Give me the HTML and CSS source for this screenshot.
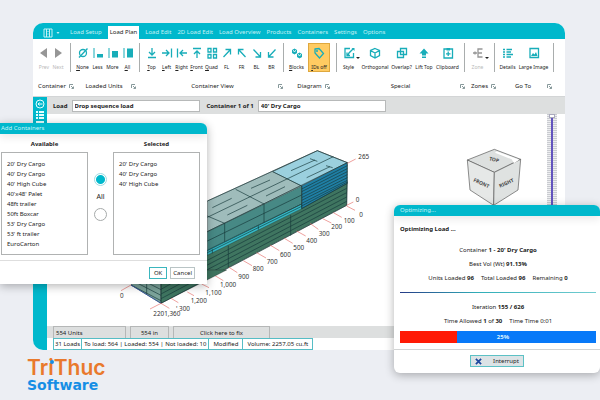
FILE: index.html
```html
<!DOCTYPE html>
<html lang="en">
<head>
<meta charset="utf-8">
<title>Load Plan</title>
<link rel="stylesheet" href="styles.css">
</head>
<body>
<main class="window">
  <nav class="tabs">
    <button class="app-menu" aria-label="Menu">
      <svg class="menu-icon" viewBox="0 0 18 10"><path d="M1 1h8v8H1zM3.500 1v8M6.500 1v8M4.500 3.500h1M4.500 6h1"/><path class="solid" d="M13.500 4h3l-1.500 2z"/></svg>
    </button>
    <a href="#">Load Setup</a>
    <a href="#" class="active">Load Plan</a>
    <a href="#">Load Edit</a>
    <a href="#">2D Load Edit</a>
    <a href="#">Load Overview</a>
    <a href="#">Products</a>
    <a href="#">Containers</a>
    <a href="#">Settings</a>
    <a href="#">Options</a>
  </nav>

  <section class="ribbon">
    <div class="tools">
      <div class="group nav-group">
        <button class="tool off"><svg viewBox="0 0 12 12"><path class="solid" d="M9 1v10L2 6z"/></svg><span>Prev</span></button>
        <button class="tool off"><svg viewBox="0 0 12 12"><path class="solid" d="M3 1v10l7-5z"/></svg><span>Next</span></button>
      </div>
      <div class="group units-group">
        <button class="tool"><svg viewBox="0 0 12 12"><circle cx="6" cy="6" r="3.500"/><path d="M2 10.500L10.500 1.500"/></svg><span><u>N</u>one</span></button>
        <button class="tool"><svg viewBox="0 0 12 12"><path class="dots" d="M2 1.500v10"/><path class="solid" d="M5 7h6v3.500H5z"/></svg><span>Less</span></button>
        <button class="tool"><svg viewBox="0 0 12 12"><path class="dots" d="M2 1.500v10"/><path class="solid" d="M5 4h6v6.500H5z"/></svg><span>More</span></button>
        <button class="tool"><svg viewBox="0 0 12 12"><path class="dots" d="M2 1.500v10"/><path class="solid" d="M5 1.500h6v9H5z"/></svg><span><u>A</u>ll</span></button>
      </div>
      <div class="group view-group">
        <button class="tool"><svg viewBox="0 0 12 12"><path d="M6 1v7M3 5l3 3 3-3M2 10.500h8"/></svg><span><u>T</u>op</span></button>
        <button class="tool"><svg viewBox="0 0 12 12"><path d="M1 6h7M5 3l3 3-3 3M10.500 1.500v9"/></svg><span><u>L</u>eft</span></button>
        <button class="tool"><svg viewBox="0 0 12 12"><path d="M11 6H4M7 3L4 6l3 3M1.500 1.500v9"/></svg><span><u>R</u>ight</span></button>
        <button class="tool"><svg viewBox="0 0 12 12"><path d="M6 11V4M3 7l3-3 3 3M2 1.500h8"/></svg><span><u>F</u>ront</span></button>
        <button class="tool"><svg viewBox="0 0 12 12"><path d="M2 1.500h3v3.500H2zM7.500 1.500h3v3.500h-3zM2 7.500h3V11H2zM7.500 7.500h3V11h-3z"/></svg><span><u>Q</u>uad</span></button>
        <button class="tool"><svg viewBox="0 0 12 12"><path d="M2.500 10L9.500 2.500M4.500 2.500h5v5"/></svg><span>FL</span></button>
        <button class="tool"><svg viewBox="0 0 12 12"><path d="M9.500 10L2.500 2.500M7.500 2.500h-5v5"/></svg><span>FR</span></button>
        <button class="tool"><svg viewBox="0 0 12 12"><path d="M2.500 2.500L9.500 10M9.500 5v5h-5"/></svg><span>BL</span></button>
        <button class="tool"><svg viewBox="0 0 12 12"><path d="M9.500 2.500L2.500 10M2.500 5v5h5"/></svg><span>BR</span></button>
      </div>
      <div class="group diagram-group">
        <button class="tool"><svg viewBox="0 0 12 12"><path class="solid" d="M1 3l2.500-1.500L6 3v3L3.500 7.500 1 6zM6 7l2.500-1.500L11 7v3L8.500 11.500 6 10z"/><path class="cut" d="M2 3.500l1.500 1L5 3.500M7 7.500l1.500 1 1.500-1"/></svg><span><u>B</u>locks</span></button>
        <button class="tool picked" aria-pressed="true"><svg viewBox="0 0 12 12"><path d="M2 2l4-.5 4.500 5-4 4.500L2 6z"/><circle class="solid" cx="4" cy="4" r="1"/></svg><span><u>I</u>Ds off</span></button>
      </div>
      <div class="group special-group">
        <button class="tool more"><svg viewBox="0 0 12 12"><path d="M7 1.500H2v9h8.500V6M5 8l1-2 4-4M4 5.500v3h3"/><path class="solid" d="M8.500 1h3v3z"/></svg><span>Style</span></button>
        <button class="tool"><svg viewBox="0 0 12 12"><path d="M6 1.500l4.500 2v5L6 11 1.500 8.500v-5zM1.500 3.500L6 6l4.500-2.500M6 6v5"/></svg><span>Orthogonal</span></button>
        <button class="tool"><svg viewBox="0 0 12 12"><path d="M4.500 1.500h6v6h-6zM4 4.500H1.500v6h6V8M4.500 4.500h3v3"/></svg><span>Overlap?</span></button>
        <button class="tool"><svg viewBox="0 0 12 12"><path class="solid" d="M6 1.500L10.500 6.500H8v2H4v-2H1.500zM4 9.500h4V11H4z"/></svg><span>Lift Top</span></button>
        <button class="tool"><svg viewBox="0 0 12 12"><path d="M2 2h8.500v9H2zM6.200 4.500v4.500M4 6.800h4.500"/><path class="solid" d="M4.500 1h3.500v2.500H4.500z"/></svg><span>Clipboard</span></button>
      </div>
      <div class="group zone-group">
        <button class="tool off more"><svg viewBox="0 0 12 12"><path d="M1 6h4M3 4.500v3M10.500 2H6v8h4.500M6 6h4"/></svg><span>Zone</span></button>
      </div>
      <div class="group goto-group">
        <button class="tool"><svg viewBox="0 0 12 12"><path d="M1 2.500h2M4.500 2.500H10M1 5h2M4.500 5H9M1 7.500h2M4.500 7.500H11M1 10h2M4.500 10H9"/></svg><span>Details</span></button>
        <button class="tool"><svg viewBox="0 0 12 12"><path d="M2 1.500h8.500v9H2z"/><path class="solid" d="M3 9l2-3 1.500 1.500L8 5l1.500 4z"/></svg><span>Large Image</span></button>
      </div>
    </div>
    <div class="captions">
      <div class="caption"><span>Container</span><svg viewBox="0 0 5 5"><path d="M.5 4V.5H4M2 2l2.500 2.500M4.500 2.500v2h-2"/></svg></div>
      <div class="caption"><span>Loaded Units</span><svg viewBox="0 0 5 5"><path d="M.5 4V.5H4M2 2l2.500 2.500M4.500 2.500v2h-2"/></svg></div>
      <div class="caption inset"><span>Container View</span><svg viewBox="0 0 5 5"><path d="M.5 4V.5H4M2 2l2.500 2.500M4.500 2.500v2h-2"/></svg></div>
      <div class="caption inset"><span>Diagram</span><svg viewBox="0 0 5 5"><path d="M.5 4V.5H4M2 2l2.500 2.500M4.500 2.500v2h-2"/></svg></div>
      <div class="caption inset"><span>Special</span><svg viewBox="0 0 5 5"><path d="M.5 4V.5H4M2 2l2.500 2.500M4.500 2.500v2h-2"/></svg></div>
      <div class="caption"><span>Zones</span><svg viewBox="0 0 5 5"><path d="M.5 4V.5H4M2 2l2.500 2.500M4.500 2.500v2h-2"/></svg></div>
      <div class="caption"><span>Go To</span><svg viewBox="0 0 5 5"><path d="M.5 4V.5H4M2 2l2.500 2.500M4.500 2.500v2h-2"/></svg></div>
    </div>
  </section>

  <div class="workspace">
    <aside class="side">
      <svg class="side-icon" viewBox="0 0 10 10"><circle cx="5" cy="5" r="4"/><path d="M7.500 5H3M4.500 3.500L3 5l1.500 1.500"/></svg>
      <svg class="side-icon bold" viewBox="0 0 10 10"><path d="M1 2h2M4 2h5M1 5h2M4 5h5M1 8h2M4 8h5"/></svg>
      <svg class="side-icon bold" viewBox="0 0 10 10"><path d="M1 1h8M1 4h8"/></svg>
    </aside>
    <div class="work">
      <div class="infobar">
        <label for="load">Load</label>
        <input id="load" type="text" value="Drop sequence load">
        <label class="second" for="box">Container 1 of 1</label>
        <input id="box" type="text" value="40' Dry Cargo">
      </div>
      <div class="canvas">
        <svg class="scene" viewBox="141 342 1500 636">
          <g transform="translate(570 390)">
            <path fill="#3f7560" d="M472 155L470 226 -87 519V420L52 365z"/>
            <path fill="#9fbcbb" d="M382 62L472 98 52 305V213z"/>
            <path fill="#9bd0de" d="M382 62L472 98 335 168 248 125z"/>
            <path fill="#1f7fa5" d="M472 98V160L335 236V168z"/>
            <path fill="#478985" d="M335 168V222L52 362V305z"/>
            <path fill="#35b8c5" d="M335 222V236L52 376V360z"/>
            <g class="edge">
              <path d="M52 213L382 62 472 98 52 305M472 98L470 226 52 447M430 80L52 262M248 125L335 168V236M137 178L222 222V278M52 258L104 280V335M302 255V317M115 347V412M335 236L472 160M335 222L52 362"/>
              <path d="M335 195L52 333M335 229L52 368M303 122L375 90M360 86L382 94M350 143L420 110M408 107L428 113M183 175L240 150M228 198L285 170M67 233L125 205M112 255L172 226"/>
              <path d="M335 177L472 107M335 185L472 116M335 194L472 125M335 203L472 134M335 211L472 143M335 220L472 151M335 228L472 156"/>
              <path d="M52 391L470 175M52 405L470 188M52 419L470 201M52 433L470 214M205 287v12M67 358v12"/>
            </g>
            <g class="tick"><path d="M472 100L497 87M470 226L490 216M470 228L495 241M430 248L455 262M398 266L424 279M360 280L385 298M320 303L347 318M283 325L308 340M240 345L268 362M200 368L228 384M160 392L186 407M117 412L142 428M75 437L100 452M35 462L57 473M-8 486L12 497"/></g>
            <g class="mark">
              <text x="505" y="87">265</text><text x="497" y="215">0</text><text x="508" y="260">0</text>
              <text x="461" y="278">100</text><text x="424" y="297">200</text><text x="386" y="319">300</text>
              <text x="349" y="338">400</text><text x="310" y="360">500</text><text x="270" y="382">600</text>
              <text x="230" y="403">700</text><text x="188" y="424">800</text><text x="145" y="448">900</text>
              <text x="90" y="472">1,000</text><text x="46" y="494">1,100</text><text x="2" y="518">1,200</text>
            </g>
          </g>
          <g transform="translate(300 810)">
            <path fill="#7ba39a" d="M93 45L140 0H183V100z"/>
            <path fill="#3f7560" d="M183 100V0H380z"/>
            <path class="edge" d="M140 20V72M93 45L183 92M100 33L183 76M115 24L183 59M183 40V100L320 28M183 86L300 24M183 72L280 20M183 58L250 20"/>
            <path fill="none" stroke="#35589a" stroke-width="3" d="M93 45L183 100"/>
            <path class="tick" d="M93 45L63 62M183 100L150 117M183 100L208 115M213 85L235 98"/>
            <g class="mark"><text x="60" y="83">0</text><text x="228" y="122">' 300</text><text x="160" y="137">2201,360</text></g>
          </g>
          <g class="cube" transform="translate(1140 360)">
            <path fill="#dde0df" d="M343 88L422 118 343 157 262 120z"/>
            <path fill="#e6e8e7" d="M262 120L343 157 341 256 270 210z"/>
            <path fill="#dfe2e1" d="M422 118L343 157 341 256 414 210z"/>
            <path class="shine" d="M350 94L418 119 402 130 395 118 345 98z"/>
            <text transform="translate(341 124) rotate(14)">TOP</text>
            <text transform="translate(302 194) rotate(24)">FRONT</text>
            <text transform="translate(381 194) rotate(-24)">RIGHT</text>
          </g>
        </svg>
        <input class="zoomer" type="range" min="0" max="100" value="0" aria-label="Zoom">
      </div>
      <div class="status">
        <span class="units">554 Units</span><span class="inches">554 in</span><button class="fix">Click here to fix</button>
      </div>
      <div class="totals">
        <span>31 Loads</span><span>To load: 564 | Loaded: 554 | Not loaded: 10</span><span class="wide">Modified</span><span class="wide">Volume: 2257.05 cu.ft</span>
      </div>
    </div>
  </div>
</main>

<footer class="logo"><span class="brand">TriThuc<i class="dot"></i></span><span class="sub">Software</span></footer>

<section class="dialog add" role="dialog" aria-label="Add Containers">
  <h2>Add Containers</h2>
  <div class="pick">
    <div class="column">
      <h3>Available</h3>
      <ul>
        <li>20' Dry Cargo</li><li>40' Dry Cargo</li><li>40' High Cube</li><li>40'x48' Palet</li><li>48ft trailer</li><li>50ft Boxcar</li><li>53' Dry Cargo</li><li>53' ft trailer</li><li>EuroCarton</li>
      </ul>
    </div>
    <div class="choice">
      <input type="radio" name="scope" id="some" aria-label="One" checked>
      <label for="all">All</label>
      <input type="radio" name="scope" id="all">
    </div>
    <div class="column">
      <h3>Selected</h3>
      <ul><li>20' Dry Cargo</li><li>40' Dry Cargo</li><li>40' High Cube</li></ul>
    </div>
  </div>
  <div class="actions"><button class="ok">OK</button><button>Cancel</button></div>
</section>

<section class="dialog optimizing" role="dialog" aria-label="Optimizing">
  <h2>Optimizing...</h2>
  <div class="progress">
    <h3>Optimizing Load ...</h3>
    <p>Container <b>1 - 20' Dry Cargo</b></p>
    <p>Best Vol (Wt) <b>91.13%</b></p>
    <p class="facts"><span>Units Loaded <b>96</b></span><span>Total Loaded <b>96</b></span><span>Remaining <b>0</b></span></p>
    <hr>
    <p>Iteration <b>155 / 626</b></p>
    <p class="facts"><span>Time Allowed <b>1</b> of <b>30</b></span><span>Time Time 0:01</span></p>
    <div class="bar"><span>25%</span></div>
  </div>
  <div class="actions"><button class="interrupt"><svg viewBox="0 0 8 8"><path d="M1 1l6 6M7 1L1 7"/></svg>Interrupt</button></div>
</section>
</body>
</html>
```
FILE: styles.css
```css
:root {
  --teal: #00b8cc;
  --icon: #18adb9;
  --gray: #dddfdf;
}

* { box-sizing: border-box; }

body {
  margin: 0;
  height: 100vh;
  padding: 23px 35px 0 33px;
  display: flex;
  flex-direction: column;
  position: relative;
  overflow: hidden;
  background: #eceef3;
  color: #222;
  font: 6px/10px "Noto Sans", sans-serif;
}

button, input { font: inherit; color: inherit; margin: 0; }
button { border: 0; background: none; padding: 0; }
h2, h3, p, ul { margin: 0; padding: 0; font-size: inherit; }
ul { list-style: none; }
svg { display: block; fill: none; stroke: currentColor; }

.window {
  flex: 1;
  min-height: 0;
  display: flex;
  flex-direction: column;
  border-radius: 10px 10px 0 10px;
  overflow: hidden;
  background: #fff;
}

.tabs {
  display: flex;
  align-items: flex-end;
  height: 16px;
  padding-left: 10px;
  background: var(--teal);
}
.tabs a {
  padding: 0 3px;
  color: #c4f1f5;
  line-height: 13px;
  text-decoration: none;
  white-space: nowrap;
}
.tabs .active { margin: 0 3px; padding: 0 2px; background: #fff; color: #222; }
.app-menu { width: 24px; height: 13px; color: #c4f1f5; }
.menu-icon { width: 18px; height: 10px; }
.menu-icon .solid { fill: currentColor; stroke: none; }

.ribbon { height: 58px; padding-top: 4px; border-bottom: 1px solid #d3d5d6; }
.tools, .captions { display: grid; white-space: nowrap; }
.tools { grid-template-columns: 38fr 69fr 144fr 53fr 128fr 30fr 59fr 11fr; }
.captions {
  grid-template-columns: 42fr 62fr 147fr 47fr 135fr 31fr 56fr 12fr;
  margin-top: 9px;
}
.group { display: grid; height: 29px; border-right: 1px solid #a9adad; }
.nav-group { grid-template-columns: 1fr 1fr; padding: 0 5px 0 4px; }
.units-group { grid-template-columns: repeat(4, 1fr); padding: 0 4px; }
.view-group { grid-template-columns: repeat(9, 1fr); padding: 0 4px; }
.diagram-group { grid-template-columns: 23fr 22fr; padding: 0 6px 0 1px; }
.special-group { grid-template-columns: 23fr 30fr 23fr 22fr 25fr; padding-right: 4px; }
.zone-group { grid-template-columns: 1fr; padding-right: 4px; }
.goto-group { grid-template-columns: 25fr 27fr; padding-right: 6px; }
.tool {
  display: flex;
  flex-direction: column;
  align-items: center;
  min-width: 0;
  padding-top: 4px;
  position: relative;
  font-size: 5px;
  line-height: 8px;
}
.tool svg { width: 12px; height: 12px; margin-bottom: 4px; color: var(--icon); stroke-width: 1.3; }
.tool .solid { fill: currentColor; stroke: none; }
.tool .cut { stroke: #fff; stroke-width: 1; }
.tool .dots { stroke-width: 2; stroke-dasharray: 1 1; }
.tool.off { color: #b9b9b9; }
.tool.off svg { color: #969696; }
.picked { background: #ffcb62; border: 1px solid #dfa83e; padding-top: 3px; }
.more::after {
  content: "";
  position: absolute;
  left: calc(50% + 7px);
  top: 14px;
  border: 2px solid transparent;
  border-top-color: #222;
}
.caption { display: flex; align-items: center; padding-left: 2px; text-align: center; }
.caption.inset { padding-left: 10px; }
.caption span { flex: 1; }
.caption svg { width: 5px; height: 5px; margin-right: 1px; color: #87999b; }

.workspace { flex: 1; min-height: 0; display: flex; }
.side {
  width: 14px;
  padding: 2px;
  display: flex;
  flex-direction: column;
  gap: 1px;
  background: var(--teal);
  color: #e4ffff;
}
.side-icon { width: 10px; height: 10px; }
.side-icon.bold { stroke-width: 2; }
.work { flex: 1; min-width: 0; display: flex; flex-direction: column; }
.infobar {
  display: flex;
  align-items: center;
  height: 17px;
  padding-left: 6px;
  background: var(--gray);
  font-weight: 700;
  white-space: nowrap;
}
.infobar input {
  width: 25%;
  height: 12px;
  margin-left: 4px;
  padding: 0 2px;
  border: 1px solid #b7b9b9;
  background: #fff;
}
.second { margin-left: 7px; }
.canvas { flex: 1; min-height: 0; display: flex; padding-right: 8px; }
.scene { flex: 1; min-width: 0; height: 100%; }
.edge { fill: none; stroke: #173a3b; stroke-width: 2; }
.tick { fill: none; stroke: #e6716d; stroke-width: 2; }
.mark { fill: #333; stroke: none; font-size: 19px; }
.cube { stroke: #555; stroke-width: 2; }
.cube .shine { fill: #fff; stroke: none; }
.cube text { fill: #444; stroke: none; font-size: 15px; font-weight: 700; text-anchor: middle; }
.zoomer {
  appearance: none;
  writing-mode: vertical-lr;
  width: 10px;
  height: 100%;
  background:
    linear-gradient(#6253be, #6253be) center / 2px 100% no-repeat,
    repeating-linear-gradient(#c9cbd0 0 1px, #eeeff1 1px 2px);
}
.zoomer::-webkit-slider-thumb {
  appearance: none;
  width: 6px;
  height: 4px;
  background: #fff;
  border: 1px solid #aaaabd;
}

.status { display: flex; height: 12px; padding-left: 6px; gap: 4px; background: var(--gray); line-height: 12px; }
.status > * { border: 1px solid #b5b7b7; border-bottom: 0; }
.units { width: 73px; padding-left: 2px; }
.inches { width: 39px; text-align: center; }
.fix { width: 97px; }
.totals { display: flex; height: 12px; padding-left: 6px; line-height: 10px; white-space: nowrap; }
.totals span { padding: 0 1px; border: 1px solid #56bdc5; }
.totals span + span { padding: 0 2px; border-left: 0; }
.totals .wide + .wide, .totals .wide { padding: 0 4px; }

.logo { display: flex; flex-direction: column; align-items: flex-start; height: 50px; padding-top: 8px; margin-left: -6px; }
.brand { position: relative; color: #e9792c; font: 600 21px/20px Inter, sans-serif; }
.dot { position: absolute; left: 23px; top: 2px; width: 4px; height: 4px; border-radius: 2px; background: #168ee5; }
.sub { color: #168ee5; font: 700 14px/14px "DejaVu Sans", sans-serif; }

.dialog { position: absolute; overflow: hidden; background: #fff; box-shadow: 0 2px 10px #0000004d; }
.dialog h2 {
  height: 11px;
  background: var(--teal);
  color: #c9f4f8;
  font-weight: 400;
  line-height: 11px;
  box-shadow: 0 3px 8px #00000018;
}
.add { left: 0; top: 123px; width: 207px; border-radius: 0 6px 0 0; }
.add h2 { padding-left: 1px; }
.pick { display: grid; grid-template-columns: 87fr 25fr 87fr; padding: 5px 7px 5px 1px; }
.column h3 { margin-bottom: 3px; text-align: center; }
.column ul { height: 103px; padding: 6px 5px; border: 1px solid #b0b2b2; }
.choice { display: flex; flex-direction: column; align-items: center; gap: 6px; padding-top: 34px; }
.choice label { line-height: 10px; font-size: 7px; }
.choice input {
  appearance: none;
  width: 13px;
  height: 13px;
  border: 1px solid #a6aaaa;
  border-radius: 50%;
  background: #fff;
}
.choice input:checked { border-color: #9edce2; background: radial-gradient(var(--teal) 4px, #fff 5px); }
.add .actions { display: flex; justify-content: flex-end; gap: 3px; padding: 6px 12px 5px 0; border-top: 1px solid #dedede; }
.add .actions button { height: 12px; padding: 0 2px; border: 1px solid #b9c4c5; line-height: 10px; }
.add .actions .ok { padding: 0 4px; border-color: #3bb6be; }

.optimizing { right: 0; top: 205px; width: 206px; border-radius: 6px; }
.optimizing h2 { padding-left: 6px; }
.progress { padding: 8px 4px 6px 6px; text-align: center; }
.progress h3 { margin-bottom: 11px; text-align: left; }
.progress p { margin-bottom: 4px; }
.facts { display: flex; justify-content: center; gap: 7px; }
.progress hr { height: 1px; margin: 9px 0; border: 0; background: linear-gradient(90deg, #253b87, #31aeb8 40%, #73cdd1); }
.progress .bar { height: 12px; margin-top: 5px; background: linear-gradient(90deg, #ff1a05 29%, #0879f8 29%); color: #d9f1ff; font-weight: 700; line-height: 12px; }
.progress .bar span { margin-left: 10px; }
.optimizing .actions { padding: 5px 0 6px; border-top: 1px solid #d2d4d4; }
.interrupt {
  display: flex;
  align-items: center;
  gap: 11px;
  height: 12px;
  margin: 0 auto;
  padding: 0 4px;
  border: 1px solid #5cc1c5;
  background: #dce3e6;
}
.interrupt svg { width: 7px; height: 7px; stroke: #1d479f; stroke-width: 2; }
```
